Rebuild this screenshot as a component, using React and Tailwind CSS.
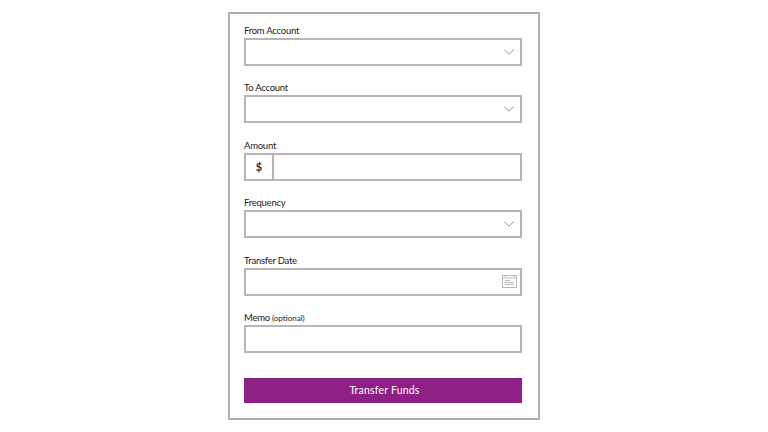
import { ChevronDown } from 'lucide-react';

const FIELDS = [
  { key: 'from', label: 'From Account', type: 'select' },
  { key: 'to', label: 'To Account', type: 'select' },
  { key: 'amount', label: 'Amount', type: 'amount' },
  { key: 'frequency', label: 'Frequency', type: 'select' },
  { key: 'date', label: 'Transfer Date', type: 'date' },
  { key: 'memo', label: 'Memo', hint: '(optional)', type: 'text' },
];

function CalendarIcon() {
  return (
    <svg width="15" height="13" viewBox="0 0 15 13" fill="none" stroke="#a8a8a8" strokeWidth="0.8">
      <rect x="0.5" y="0.5" width="14" height="12" />
      <path d="M0.5 3H14.5" />
      <path d="M3 0.5V2M12 0.5V2" />
      <path d="M3 5.5H8M3 7.5H12M3 9.5H12" />
    </svg>
  );
}

function Field({ field }) {
  return (
    <div className="flex flex-col">
      <label className="h-[16px] text-[9.5px] leading-[18px] tracking-[-0.25px] text-[#222]">
        {field.label}
        {field.hint && <span className="ml-[2px] text-[8px] tracking-normal">{field.hint}</span>}
      </label>
      <div className="flex h-[28px] items-center border-2 border-[#b6b6b6] bg-white">
        {field.type === 'amount' && (
          <div className="flex h-full w-[28px] items-center justify-center border-r-2 border-[#b6b6b6] text-[11px] font-bold text-[#333]">
            $
          </div>
        )}
        <div className="flex-1" />
        {field.type === 'select' && <ChevronDown className="mr-[2px] text-[#8c8c8c]" size={18} strokeWidth={1.25} />}
        {field.type === 'date' && (
          <div className="mr-[3px] flex">
            <CalendarIcon />
          </div>
        )}
      </div>
    </div>
  );
}

export default function App() {
  return (
    <main className="flex h-[432px] w-[768px] justify-center bg-white pt-[12px] font-['Lato',sans-serif]">
      <div className="flex h-[408px] w-[312px] flex-col border-2 border-[#aeaeae] pl-[14px] pr-[16px] pt-[8px]">
        <div className="flex flex-col gap-[13.4px]">
          {FIELDS.map((field) => (
            <Field key={field.key} field={field} />
          ))}
        </div>
        <button className="mt-[25px] h-[25px] w-full bg-[#8e1f85] pl-[3px] text-[10.5px] tracking-[0.2px] text-white">
          Transfer Funds
        </button>
      </div>
    </main>
  );
}
